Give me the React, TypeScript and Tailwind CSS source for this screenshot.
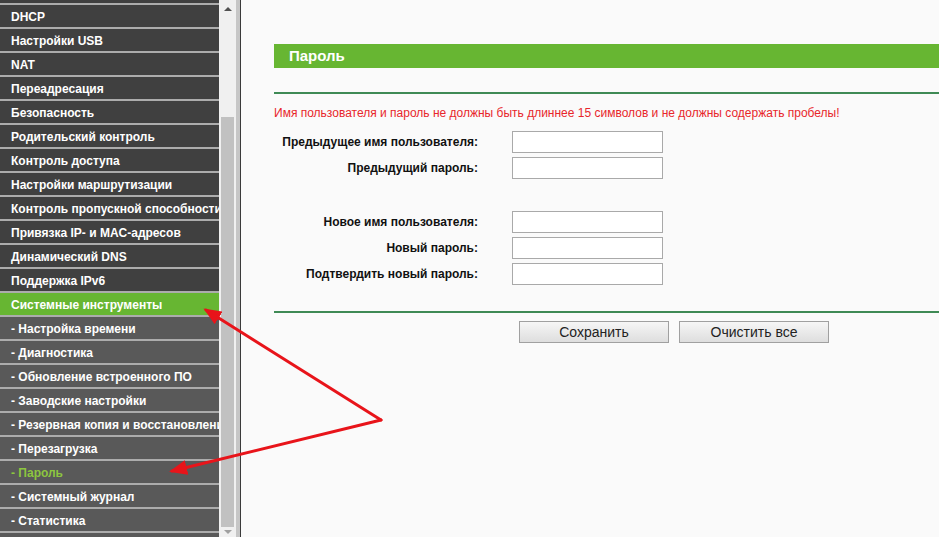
import React from "react";

type Item = { label: string; kind: "top" | "active" | "sub" | "subActive" };

const items: Item[] = [
  { label: "DHCP", kind: "top" },
  { label: "Настройки USB", kind: "top" },
  { label: "NAT", kind: "top" },
  { label: "Переадресация", kind: "top" },
  { label: "Безопасность", kind: "top" },
  { label: "Родительский контроль", kind: "top" },
  { label: "Контроль доступа", kind: "top" },
  { label: "Настройки маршрутизации", kind: "top" },
  { label: "Контроль пропускной способности", kind: "top" },
  { label: "Привязка IP- и MAC-адресов", kind: "top" },
  { label: "Динамический DNS", kind: "top" },
  { label: "Поддержка IPv6", kind: "top" },
  { label: "Системные инструменты", kind: "active" },
  { label: "- Настройка времени", kind: "sub" },
  { label: "- Диагностика", kind: "sub" },
  { label: "- Обновление встроенного ПО", kind: "sub" },
  { label: "- Заводские настройки", kind: "sub" },
  { label: "- Резервная копия и восстановление", kind: "sub" },
  { label: "- Перезагрузка", kind: "sub" },
  { label: "- Пароль", kind: "subActive" },
  { label: "- Системный журнал", kind: "sub" },
  { label: "- Статистика", kind: "sub" },
];

function MenuRow({ item }: { item: Item }) {
  const bg =
    item.kind === "top"
      ? "bg-[#404040] text-white"
      : item.kind === "active"
      ? "bg-[#67b632] text-white"
      : item.kind === "sub"
      ? "bg-[#595959] text-white"
      : "bg-[#595959] text-[#8dc63f]";
  return (
    <div className={`h-[24px] shrink-0 border-t-2 border-[#acacac] ${bg} flex items-center pl-[11px] pt-[1px] whitespace-nowrap overflow-hidden text-[12px] font-bold`}>
      {item.label}
    </div>
  );
}

function FormRow({ label }: { label: string }) {
  return (
    <div className="flex items-center h-[22px]">
      <div className="w-[204px] text-right text-[12px] font-bold text-[#111]">{label}</div>
      <div className="ml-[34px] w-[151px] h-[22px] bg-white border border-[#a9a9a9]" />
    </div>
  );
}

export default function App() {
  return (
    <div
      className="relative w-[939px] h-[537px] overflow-hidden flex bg-[#fafafa]"
      style={{ fontFamily: '"Liberation Sans", Arial, sans-serif' }}
    >
      {/* Sidebar menu */}
      <div className="w-[219px] shrink-0 flex flex-col bg-[#595959]">
        <div className="h-[3px] shrink-0 bg-[#404040]" />
        {items.map((it) => (
          <MenuRow key={it.label} item={it} />
        ))}
        <div className="h-[10px] shrink-0 border-t-2 border-[#acacac] bg-[#595959]" />
      </div>

      {/* Scrollbar */}
      <div className="w-[17px] shrink-0 bg-[#f0f0f0] flex flex-col items-center">
        <div className="h-[17px] w-full flex items-center justify-center">
          <div className="w-0 h-0 border-l-[4px] border-r-[4px] border-b-[4px] border-l-transparent border-r-transparent border-b-[#505050]" />
        </div>
        <div className="mt-[100px] h-[410px] w-[13px] bg-[#c1c1c1]" />
        <div className="flex-1 w-full flex items-center justify-center">
          <div className="w-0 h-0 border-l-[4px] border-r-[4px] border-t-[4px] border-l-transparent border-r-transparent border-t-[#a0a0a0]" />
        </div>
      </div>
      <div className="w-[4px] shrink-0 bg-[#c6c6c6]" />
      <div className="w-[1px] shrink-0 bg-[#3a3a3a]" />

      {/* Main content */}
      <div className="flex-1 pl-[33px] pt-[44px] flex flex-col">
        <div className="h-[24px] bg-[#67b632] flex items-center pl-[15px] text-white font-bold text-[15px]">
          Пароль
        </div>
        <div className="mt-[24px] h-[2px] bg-[#3f8a55]" />
        <div className="mt-[12px] text-[12px] leading-[14px] text-[#e8262b]">
          Имя пользователя и пароль не должны быть длиннее 15 символов и не должны содержать пробелы!
        </div>
        <div className="mt-[11px] flex flex-col gap-[4px]">
          <FormRow label="Предыдущее имя пользователя:" />
          <FormRow label="Предыдущий пароль:" />
        </div>
        <div className="mt-[32px] flex flex-col gap-[4px]">
          <FormRow label="Новое имя пользователя:" />
          <FormRow label="Новый пароль:" />
          <FormRow label="Подтвердить новый пароль:" />
        </div>
        <div className="mt-[26px] h-[2px] bg-[#3f8a55]" />
        <div className="mt-[8px] ml-[245px] flex gap-[10px]">
          <button className="w-[150px] h-[22px] border border-[#a0a0a0] bg-gradient-to-b from-[#f6f6f6] to-[#dedede] text-[14px] text-[#222]">
            Сохранить
          </button>
          <button className="w-[150px] h-[22px] border border-[#a0a0a0] bg-gradient-to-b from-[#f6f6f6] to-[#dedede] text-[14px] text-[#222]">
            Очистить все
          </button>
        </div>
      </div>

      {/* Annotation arrows */}
      <svg className="absolute inset-0 pointer-events-none" width="939" height="537" viewBox="0 0 939 537">
        <defs>
          <marker id="ah" markerWidth="6" markerHeight="5" refX="5" refY="2.5" orient="auto" markerUnits="strokeWidth">
            <polygon points="0,0 6,2.5 0,5" fill="#e8141a" />
          </marker>
        </defs>
        <line x1="381" y1="420" x2="206" y2="310" stroke="#e8141a" strokeWidth="3" markerEnd="url(#ah)" strokeLinecap="round" />
        <line x1="381" y1="420" x2="172" y2="471" stroke="#e8141a" strokeWidth="3" markerEnd="url(#ah)" strokeLinecap="round" />
      </svg>
    </div>
  );
}
